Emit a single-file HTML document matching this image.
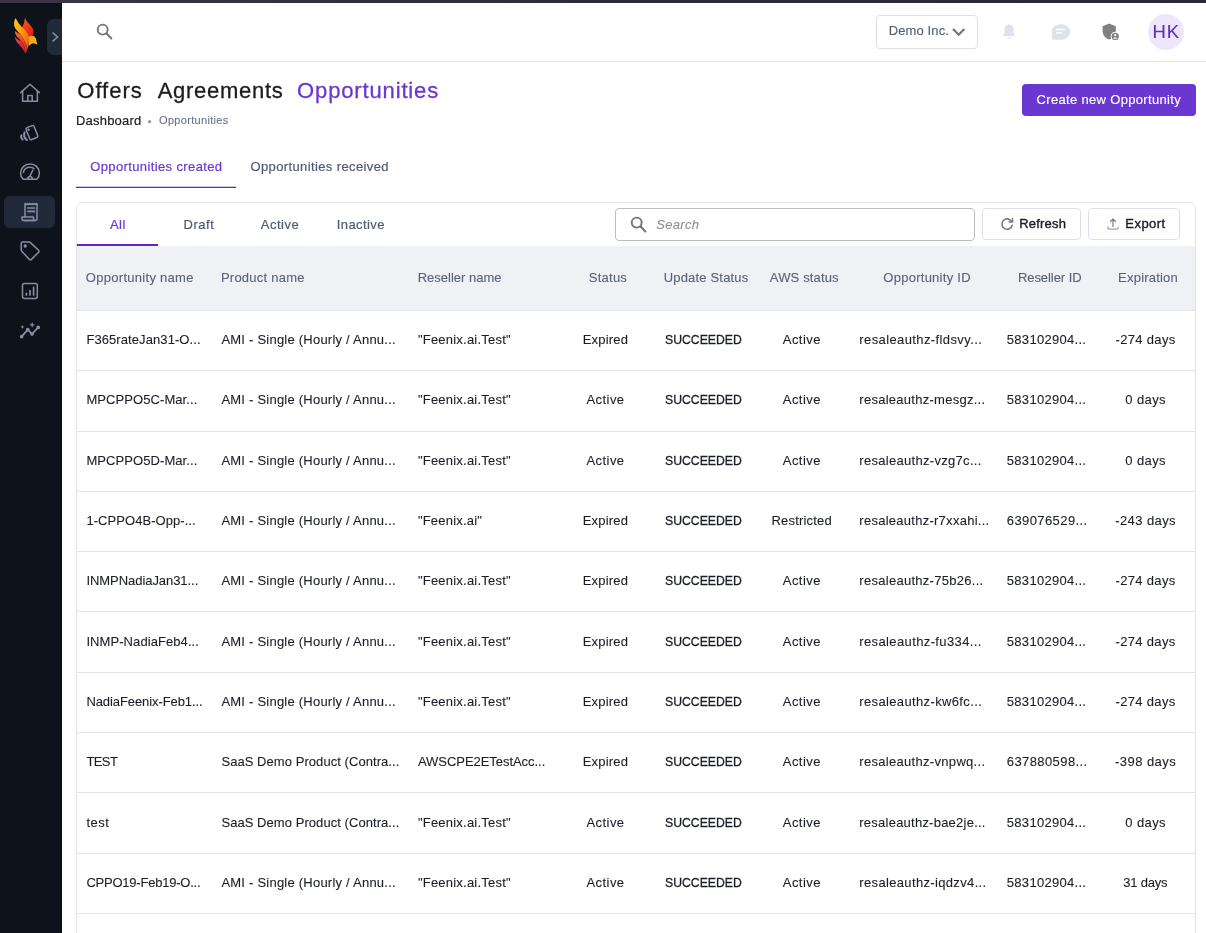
<!DOCTYPE html>
<html>
<head>
<meta charset="utf-8">
<title>Opportunities</title>
<style>
*{box-sizing:border-box;margin:0;padding:0}
html,body{width:1206px;height:933px;overflow:hidden;background:#fff;font-family:"Liberation Sans",sans-serif;color:#1b1e26}
.abs{position:absolute}
#topbar{left:0;top:0;width:1206px;height:3px;background:linear-gradient(90deg,#3a3546 0,#2c2938 55%,#2b2838 100%);z-index:10}
#side{left:0;top:0;width:62px;height:933px;background:#0e121b}
#toggle{left:47px;top:19px;width:15px;height:36px;background:#222a3a;border-radius:7px 0 0 7px}
#header{left:62px;top:3px;width:1144px;height:59px;background:#fff;border-bottom:1px solid #e1e4ea}
.navact{left:4px;top:196px;width:51px;height:32px;background:#222a3a;border-radius:6px}
.t{position:absolute;white-space:nowrap;line-height:1;-webkit-text-stroke:0.1px}
#company{left:876px;top:15px;width:102px;height:34px;border:1px solid #dcdfe6;border-radius:4px}
#avatar{left:1148px;top:14px;width:36px;height:36px;border-radius:50%;background:#efe6fd}
#createbtn{left:1022px;top:84px;width:174px;height:32px;background:#6a37d0;border-radius:4px}
#tabline{left:76px;top:186px;width:160px;height:2px;background:linear-gradient(#6938d3 0,#6938d3 100%);background:linear-gradient(rgba(90,40,200,.3) 50%,#5e2ccb 50%)}
#card{left:76px;top:202px;width:1120px;height:760px;border:1px solid #e1e4ea;border-radius:7px}
#allline{left:77px;top:244px;width:81px;height:2px;background:#5a28c8}
#thead{left:77px;top:246px;width:1118px;height:65px;background:#eff1f5;border-bottom:1px solid #e1e4ea;border-radius:0 2px 0 0}
#search{left:615px;top:208px;width:360px;height:33px;border:1px solid #bdbdbd;border-radius:4px}
.btn{border:1px solid #dcdfe6;border-radius:4px;height:32px;top:208px}
.row{left:77px;width:1118px;height:1px;background:#e1e4ea}
svg{position:absolute;overflow:visible}
.ic{fill:none;stroke:#858fa3;stroke-width:1.5;stroke-linecap:round;stroke-linejoin:round}
</style>
</head>
<body>
<div id="wrap" style="position:absolute;left:0;top:0;width:1206px;height:933px;will-change:transform;overflow:hidden">
<div class="abs" id="side"></div>
<div class="abs" id="topbar"></div>
<div class="abs" id="toggle"></div>
<div class="abs navact"></div>
<div class="abs" id="header"></div>

<!-- logo -->
<svg style="left:13px;top:16px" width="26" height="40" viewBox="0 0 26 40">
<defs>
<linearGradient id="g1" x1="0" y1="0" x2="1" y2="1"><stop offset="0" stop-color="#ffd21a"/><stop offset="0.55" stop-color="#f98a12"/><stop offset="1" stop-color="#ee4a16"/></linearGradient>
<linearGradient id="g2" x1="0" y1="0" x2="0.6" y2="1"><stop offset="0" stop-color="#f7631a"/><stop offset="1" stop-color="#e4201c"/></linearGradient>
<linearGradient id="g3" x1="0" y1="0" x2="1" y2="1"><stop offset="0" stop-color="#f7701a"/><stop offset="1" stop-color="#e0201e"/></linearGradient>
<linearGradient id="g4" x1="0" y1="0" x2="1" y2="1"><stop offset="0" stop-color="#e8455a"/><stop offset="1" stop-color="#d4141c"/></linearGradient><linearGradient id="g5" x1="0" y1="0" x2="1" y2="1"><stop offset="0" stop-color="#f4a01a"/><stop offset="1" stop-color="#f6b818"/></linearGradient></defs>
<path d="M12 1.2 C12.6 4 14.2 5.8 15.8 7.6 C18 10 20.4 12.4 20.5 15.2 C20.5 17 20 18.6 19 20 L15 21.4 C13.4 17.6 10.4 14 9 11.4 C10.4 9.4 11.6 5.6 12 1.2Z" fill="url(#g2)"/>
<path d="M1.7 20.4 C3.5 23 6 24.5 7.9 24.8 L11.5 31 L12.5 37.8 C11.5 36 11 35 10.4 34 C9.5 32.5 8.5 31.3 7.3 29.9 C5.8 28.2 3.8 26.5 3.2 24.8 C2.4 23.5 2 22 1.7 20.4Z" fill="url(#g4)"/>
<path d="M1.9 15 L7.9 19.1 L12.5 26.8 L14.3 32 L12.5 38.8 C12.6 36 12.2 33 11.5 31 C10.5 28.5 9.5 27 7.9 24.8 C6 22.5 3.2 20.5 2.2 17.5Z" fill="url(#g3)"/>
<path d="M2.7 2 C4.5 6 6.5 8.5 8.4 10.4 C11 13 13.5 15.5 14.5 17.6 C16 20 16.4 22 16.2 25 C15.8 30 14 35 12.5 38.8 C13.6 35.5 14.6 33.5 14.3 32 C13.8 29.5 13.2 28 12.5 26.8 C11 24 9.5 21.5 7.9 19.1 C5.5 16 2.5 13.5 1.4 10.4 C0.8 8 1 4.5 2.7 2Z" fill="url(#g1)"/>
<path d="M15.5 21.6 C16.4 20 18.6 19.4 20.4 20 C22 20.6 22.8 22.2 23.2 23.8 C23.5 25.4 23.9 27.2 24.4 28.8 C23 27.8 21.4 27 19.8 27.2 C18.2 27.6 17 29 15.6 29.8 C16.2 27 16.4 24 15.5 21.6Z" fill="url(#g5)"/>
</svg>
<!-- toggle chevron -->
<svg style="left:47px;top:19px" width="15" height="36" viewBox="0 0 15 36"><path d="M5.6 13.6 L10.6 18 L5.6 22.4" fill="none" stroke="#8390a8" stroke-width="1.5"/></svg>

<!-- sidebar icons -->
<svg style="left:19px;top:82px" width="22" height="22" viewBox="0 0 22 22" class="ic"><path d="M1.6 10.6 L11 2.2 L20.4 10.6"/><path d="M3.6 9 V19.2 H18.4 V9"/><path d="M8.8 19.2 V13.4 H13.2 V19.2"/></svg>
<svg style="left:19px;top:123px" width="22" height="22" viewBox="0 0 22 22" class="ic"><g transform="rotate(-22 12.9 9.6)"><rect x="8.6" y="3.2" width="8.6" height="12.8" rx="1.6"/><circle cx="10.9" cy="5.6" r="0.5" fill="#858fa3"/></g><path d="M5.6 9.4 C4.6 12 5.6 15.2 7.8 17" stroke-width="2.1"/><path d="M2.4 12.2 C1.8 13.8 2.4 15.6 3.6 16.6" stroke-width="1.9"/></svg>
<svg style="left:19px;top:162px" width="22" height="20" viewBox="0 0 22 20" class="ic"><path d="M4.2 17.2 H17.8 C19.6 15.6 20.4 13.4 20.4 11.2 C20.4 6 16.2 2 11 2 C5.8 2 1.6 6 1.6 11.2 C1.6 13.4 2.4 15.6 4.2 17.2Z"/><path d="M10.8 14.4 L13.8 8.2"/><path d="M4.4 10.4 C5 7.2 7.8 5.2 11 5.2 C12.6 5.2 14 5.7 15 6.6"/><path d="M8.6 17 C8.8 15.4 9.8 14.6 11 14.6 C12.2 14.6 13.2 15.4 13.4 17"/></svg>
<svg style="left:19px;top:201px" width="22" height="22" viewBox="0 0 22 22" class="ic" style="stroke:#9ca6ba"><path d="M6 16 V2.6 L7.2 3.4 L8.4 2.6 L9.6 3.4 L10.8 2.6 L12 3.4 L13.2 2.6 L14.4 3.4 L15.6 2.6 L16.8 3.4 L18 2.6 V17.4 C18 18.6 17.2 19.4 16 19.4 H5"/><path d="M3 16 H14.4 V17.6 C14.4 18.6 15 19.4 16 19.4 H4.8 C3.8 19.4 3 18.6 3 17.6Z"/><path d="M9 7 H15.4 M9 10.4 H15.4" stroke-width="1.7"/></svg>
<svg style="left:19px;top:240px" width="22" height="22" viewBox="0 0 22 22" class="ic"><path d="M2.2 3.4 C2.2 2.6 2.8 2 3.6 2 H10 C10.5 2 11 2.2 11.4 2.6 L19.6 10.2 C20.2 10.8 20.2 11.6 19.6 12.2 L12.4 19.4 C11.8 20 11 20 10.4 19.4 L2.8 11.2 C2.4 10.8 2.2 10.3 2.2 9.8Z"/><circle cx="6.2" cy="6" r="0.9" fill="#858fa3"/></svg>
<svg style="left:19px;top:280px" width="22" height="22" viewBox="0 0 22 22" class="ic"><rect x="3.5" y="3.6" width="14.8" height="14.8" rx="2"/><path d="M7.4 15 V13.4 M11 15 V10.6 M14.6 15 V7.4" stroke-width="1.7"/></svg>
<svg style="left:19px;top:320px" width="22" height="22" viewBox="0 0 22 22" class="ic"><path d="M2.6 16.6 L8.8 9.6 L13 14 L19.2 7.4" stroke-width="1.8"/><circle cx="2.6" cy="16.6" r="1.1" fill="#858fa3"/><circle cx="8.8" cy="9.6" r="1.1" fill="#858fa3"/><circle cx="13" cy="14" r="1.1" fill="#858fa3"/><circle cx="19.2" cy="7.4" r="1.1" fill="#858fa3"/><path d="M13.2 3 V6.6 M11.4 4.8 H15" stroke-width="1.2"/><path d="M3.4 6 V8 M2.4 7 H4.4" stroke-width="1"/></svg>

<!-- header -->
<svg style="left:94px;top:21px" width="22" height="22" viewBox="0 0 22 22"><circle cx="8.7" cy="8.6" r="5" fill="none" stroke="#757575" stroke-width="1.95"/><path d="M12.6 12.6 L17.4 17.4" stroke="#757575" stroke-width="2.1" stroke-linecap="round"/></svg>
<div class="abs" id="company"></div>
<svg style="left:950px;top:26px" width="16" height="12" viewBox="0 0 16 12"><path d="M3 3 L8.7 8.7 L14.4 3" fill="none" stroke="#767676" stroke-width="2.3"/></svg>
<!-- bell -->
<svg style="left:1000px;top:23px" width="18" height="18" viewBox="0 0 18 18"><path d="M9 1.6 C6.2 1.6 4.4 3.8 4.4 6.4 V9.6 C4.4 10.6 3.8 11.4 3.2 12 C2.8 12.4 3 13.2 3.8 13.2 H14.2 C15 13.2 15.2 12.4 14.8 12 C14.2 11.4 13.6 10.6 13.6 9.6 V6.4 C13.6 3.8 11.8 1.6 9 1.6Z" fill="#dfe2ea"/><path d="M7 14.4 H11 C11 15.4 10.1 16 9 16 C7.9 16 7 15.4 7 14.4Z" fill="#e6e8ee"/></svg>
<!-- chat -->
<svg style="left:1051px;top:24px" width="20" height="17" viewBox="0 0 20 17"><path d="M9.6 0.2 H10.4 C15.4 0.2 19 3.4 19 7.6 C19 12.2 15.4 15.8 10.4 15.8 H3 C1.6 15.8 0.8 15 0.8 13.6 V8 C0.8 3.4 4.6 0.2 9.6 0.2Z" fill="#dfe2ea"/><path d="M5.6 5.4 H13.6 M5.6 9 H10.2" stroke="#fff" stroke-width="1.5" stroke-linecap="round"/></svg>
<!-- shield -->
<svg style="left:1101px;top:23px" width="20" height="18" viewBox="0 0 20 18"><path d="M8.2 0.6 L14.8 3.2 V8 C14.8 12 12 15.4 8.2 16.6 C4.4 15.4 1.6 12 1.6 8 V3.2Z" fill="#808080"/><circle cx="14.2" cy="13.4" r="4.6" fill="#fff"/><circle cx="14.2" cy="13.4" r="3.6" fill="#808080"/><circle cx="14.2" cy="12.2" r="1.1" fill="#fff"/><path d="M12 15.2 C12.6 14.2 15.8 14.2 16.4 15.2 C15.8 16 12.6 16 12 15.2Z" fill="#fff"/></svg>
<div class="abs" id="avatar"></div>

<svg style="left:146px;top:118px" width="8" height="8" viewBox="0 0 8 8"><circle cx="3.6" cy="3.7" r="1.6" fill="#8d97ad"/></svg>
<div class="abs" id="createbtn"></div>
<div class="abs" id="tabline"></div>

<!-- card -->
<div class="abs" id="card"></div>
<div class="abs" id="thead"></div>
<div class="abs" id="allline"></div>
<div class="abs" id="search"></div>
<svg style="left:628px;top:214px" width="22" height="22" viewBox="0 0 22 22"><circle cx="8.7" cy="8.6" r="5" fill="none" stroke="#757575" stroke-width="1.95"/><path d="M12.6 12.6 L17.4 17.4" stroke="#757575" stroke-width="2.1" stroke-linecap="round"/></svg>
<div class="abs btn" style="left:982px;width:99px"></div>
<div class="abs btn" style="left:1088px;width:92px"></div>
<!-- refresh icon -->
<svg style="left:1000px;top:217px" width="14" height="14" viewBox="0 0 14 14"><path d="M11.6 4.4 A5.2 5.2 0 1 0 12.2 8.2" fill="none" stroke="#7a7a7a" stroke-width="1.6" stroke-linecap="round"/><path d="M12.6 1.4 V5 H9" fill="none" stroke="#7a7a7a" stroke-width="1.4" stroke-linecap="round" stroke-linejoin="round"/></svg>
<!-- export icon -->
<svg style="left:1106px;top:217px" width="14" height="14" viewBox="0 0 14 14"><path d="M7 9.4 V2.2 M4.4 4.6 L7 2 L9.6 4.6" fill="none" stroke="#7a7a7a" stroke-width="1.2" stroke-linecap="round" stroke-linejoin="round"/><path d="M1.8 9.8 V10.6 C1.8 11.6 2.4 12.2 3.4 12.2 H10.6 C11.6 12.2 12.2 11.6 12.2 10.6 V9.8" fill="none" stroke="#9aa1b0" stroke-width="1.2" stroke-linecap="round"/></svg>

<div class="t" style="left:888.71px;top:24.40px;font-size:13px;color:#515a74;letter-spacing:0.115px;">Demo Inc.</div>
<div class="t" style="left:1152.57px;top:23.35px;font-size:18.5px;color:#5b30c4;letter-spacing:0.762px;">HK</div>
<div class="t" style="left:77.31px;top:79.60px;font-size:22px;color:#1c1c1c;letter-spacing:0.993px;-webkit-text-stroke:0.3px;">Offers</div>
<div class="t" style="left:157.71px;top:79.60px;font-size:22px;color:#1c1c1c;letter-spacing:0.717px;-webkit-text-stroke:0.3px;">Agreements</div>
<div class="t" style="left:297.11px;top:79.60px;font-size:22px;color:#6938d3;letter-spacing:0.852px;-webkit-text-stroke:0.3px;">Opportunities</div>
<div class="t" style="left:76.02px;top:113.70px;font-size:13px;color:#1c1c1c;letter-spacing:0.195px;-webkit-text-stroke:0.2px;">Dashboard</div>
<div class="t" style="left:159.00px;top:115.00px;font-size:11px;color:#66718c;letter-spacing:0.321px;">Opportunities</div>
<div class="t" style="left:1036.51px;top:92.90px;font-size:13px;color:#ffffff;letter-spacing:0.332px;-webkit-text-stroke:0.15px #fff;">Create new Opportunity</div>
<div class="t" style="left:90.22px;top:160.10px;font-size:13px;color:#6938d3;letter-spacing:0.379px;-webkit-text-stroke:0.2px;">Opportunities created</div>
<div class="t" style="left:250.41px;top:160.10px;font-size:13px;color:#515a74;letter-spacing:0.385px;-webkit-text-stroke:0.2px;">Opportunities received</div>
<div class="t" style="left:109.92px;top:218.20px;font-size:13px;color:#6938d3;letter-spacing:0.458px;-webkit-text-stroke:0.2px;">All</div>
<div class="t" style="left:183.51px;top:218.20px;font-size:13px;color:#515a74;letter-spacing:0.550px;-webkit-text-stroke:0.2px;">Draft</div>
<div class="t" style="left:260.81px;top:218.20px;font-size:13px;color:#515a74;letter-spacing:0.513px;-webkit-text-stroke:0.2px;">Active</div>
<div class="t" style="left:336.72px;top:218.20px;font-size:13px;color:#515a74;letter-spacing:0.408px;-webkit-text-stroke:0.2px;">Inactive</div>
<div class="t" style="left:656.21px;top:218.20px;font-size:13px;color:#8c8c8c;letter-spacing:0.333px;font-style:italic;">Search</div>
<div class="t" style="left:1019.21px;top:216.80px;font-size:13px;color:#1b1e26;letter-spacing:0.190px;-webkit-text-stroke:0.4px;">Refresh</div>
<div class="t" style="left:1125.32px;top:216.80px;font-size:13px;color:#1b1e26;letter-spacing:0.458px;-webkit-text-stroke:0.4px;">Export</div>
<div class="t" style="left:85.82px;top:271.40px;font-size:13px;color:#5a6179;letter-spacing:0.288px;">Opportunity name</div>
<div class="t" style="left:220.91px;top:271.40px;font-size:13px;color:#5a6179;letter-spacing:0.239px;">Product name</div>
<div class="t" style="left:417.72px;top:271.40px;font-size:13px;color:#5a6179;letter-spacing:0.003px;">Reseller name</div>
<div class="t" style="left:588.71px;top:271.40px;font-size:13px;color:#5a6179;letter-spacing:0.262px;">Status</div>
<div class="t" style="left:663.71px;top:271.40px;font-size:13px;color:#5a6179;letter-spacing:0.182px;">Update Status</div>
<div class="t" style="left:769.81px;top:271.40px;font-size:13px;color:#5a6179;letter-spacing:0.148px;">AWS status</div>
<div class="t" style="left:883.31px;top:271.40px;font-size:13px;color:#5a6179;letter-spacing:0.265px;">Opportunity ID</div>
<div class="t" style="left:1017.91px;top:271.40px;font-size:13px;color:#5a6179;letter-spacing:-0.063px;">Reseller ID</div>
<div class="t" style="left:1118.12px;top:271.40px;font-size:13px;color:#5a6179;letter-spacing:0.206px;">Expiration</div>
<div class="t" style="left:86.42px;top:333.30px;font-size:13px;color:#1b1e26;letter-spacing:0.084px;">F365rateJan31-O...</div>
<div class="t" style="left:221.41px;top:333.30px;font-size:13px;color:#1b1e26;letter-spacing:0.226px;">AMI - Single (Hourly / Annu...</div>
<div class="t" style="left:417.92px;top:333.30px;font-size:13px;color:#1b1e26;letter-spacing:0.216px;">"Feenix.ai.Test"</div>
<div class="t" style="left:582.71px;top:333.30px;font-size:13px;color:#1b1e26;letter-spacing:0.182px;">Expired</div>
<div class="t" style="left:665.12px;top:333.30px;font-size:13px;color:#1b1e26;letter-spacing:0.000px;-webkit-text-stroke:0.3px;transform:scaleX(0.9405);transform-origin:0 0;">SUCCEEDED</div>
<div class="t" style="left:782.81px;top:333.30px;font-size:13px;color:#1b1e26;letter-spacing:0.433px;">Active</div>
<div class="t" style="left:859.31px;top:333.30px;font-size:13px;color:#1b1e26;letter-spacing:0.391px;">resaleauthz-fldsvy...</div>
<div class="t" style="left:1006.81px;top:333.30px;font-size:13px;color:#1b1e26;letter-spacing:0.297px;">583102904...</div>
<div class="t" style="left:1115.57px;top:333.30px;font-size:13px;color:#1b1e26;letter-spacing:0.322px;">-274 days</div>
<div class="t" style="left:86.42px;top:393.30px;font-size:13px;color:#1b1e26;letter-spacing:0.077px;">MPCPPO5C-Mar...</div>
<div class="t" style="left:221.41px;top:393.30px;font-size:13px;color:#1b1e26;letter-spacing:0.226px;">AMI - Single (Hourly / Annu...</div>
<div class="t" style="left:417.92px;top:393.30px;font-size:13px;color:#1b1e26;letter-spacing:0.216px;">"Feenix.ai.Test"</div>
<div class="t" style="left:586.51px;top:393.30px;font-size:13px;color:#1b1e26;letter-spacing:0.433px;">Active</div>
<div class="t" style="left:665.12px;top:393.30px;font-size:13px;color:#1b1e26;letter-spacing:0.000px;-webkit-text-stroke:0.3px;transform:scaleX(0.9405);transform-origin:0 0;">SUCCEEDED</div>
<div class="t" style="left:782.81px;top:393.30px;font-size:13px;color:#1b1e26;letter-spacing:0.433px;">Active</div>
<div class="t" style="left:859.31px;top:393.30px;font-size:13px;color:#1b1e26;letter-spacing:0.268px;">resaleauthz-mesgz...</div>
<div class="t" style="left:1006.81px;top:393.30px;font-size:13px;color:#1b1e26;letter-spacing:0.297px;">583102904...</div>
<div class="t" style="left:1125.22px;top:393.30px;font-size:13px;color:#1b1e26;letter-spacing:0.412px;">0 days</div>
<div class="t" style="left:86.42px;top:454.00px;font-size:13px;color:#1b1e26;letter-spacing:0.077px;">MPCPPO5D-Mar...</div>
<div class="t" style="left:221.41px;top:454.00px;font-size:13px;color:#1b1e26;letter-spacing:0.226px;">AMI - Single (Hourly / Annu...</div>
<div class="t" style="left:417.92px;top:454.00px;font-size:13px;color:#1b1e26;letter-spacing:0.216px;">"Feenix.ai.Test"</div>
<div class="t" style="left:586.51px;top:454.00px;font-size:13px;color:#1b1e26;letter-spacing:0.433px;">Active</div>
<div class="t" style="left:665.12px;top:454.00px;font-size:13px;color:#1b1e26;letter-spacing:0.000px;-webkit-text-stroke:0.3px;transform:scaleX(0.9405);transform-origin:0 0;">SUCCEEDED</div>
<div class="t" style="left:782.81px;top:454.00px;font-size:13px;color:#1b1e26;letter-spacing:0.433px;">Active</div>
<div class="t" style="left:859.31px;top:454.00px;font-size:13px;color:#1b1e26;letter-spacing:0.301px;">resaleauthz-vzg7c...</div>
<div class="t" style="left:1006.81px;top:454.00px;font-size:13px;color:#1b1e26;letter-spacing:0.297px;">583102904...</div>
<div class="t" style="left:1125.22px;top:454.00px;font-size:13px;color:#1b1e26;letter-spacing:0.412px;">0 days</div>
<div class="t" style="left:86.42px;top:514.00px;font-size:13px;color:#1b1e26;letter-spacing:0.053px;">1-CPPO4B-Opp-...</div>
<div class="t" style="left:221.41px;top:514.00px;font-size:13px;color:#1b1e26;letter-spacing:0.226px;">AMI - Single (Hourly / Annu...</div>
<div class="t" style="left:417.92px;top:514.00px;font-size:13px;color:#1b1e26;letter-spacing:0.199px;">"Feenix.ai"</div>
<div class="t" style="left:582.71px;top:514.00px;font-size:13px;color:#1b1e26;letter-spacing:0.182px;">Expired</div>
<div class="t" style="left:665.12px;top:514.00px;font-size:13px;color:#1b1e26;letter-spacing:0.000px;-webkit-text-stroke:0.3px;transform:scaleX(0.9405);transform-origin:0 0;">SUCCEEDED</div>
<div class="t" style="left:771.41px;top:514.00px;font-size:13px;color:#1b1e26;letter-spacing:0.204px;">Restricted</div>
<div class="t" style="left:859.31px;top:514.00px;font-size:13px;color:#1b1e26;letter-spacing:0.266px;">resaleauthz-r7xxahi...</div>
<div class="t" style="left:1006.81px;top:514.00px;font-size:13px;color:#1b1e26;letter-spacing:0.406px;">639076529...</div>
<div class="t" style="left:1115.22px;top:514.00px;font-size:13px;color:#1b1e26;letter-spacing:0.410px;">-243 days</div>
<div class="t" style="left:86.42px;top:574.30px;font-size:13px;color:#1b1e26;letter-spacing:-0.054px;">INMPNadiaJan31...</div>
<div class="t" style="left:221.41px;top:574.30px;font-size:13px;color:#1b1e26;letter-spacing:0.226px;">AMI - Single (Hourly / Annu...</div>
<div class="t" style="left:417.92px;top:574.30px;font-size:13px;color:#1b1e26;letter-spacing:0.216px;">"Feenix.ai.Test"</div>
<div class="t" style="left:582.71px;top:574.30px;font-size:13px;color:#1b1e26;letter-spacing:0.182px;">Expired</div>
<div class="t" style="left:665.12px;top:574.30px;font-size:13px;color:#1b1e26;letter-spacing:0.000px;-webkit-text-stroke:0.3px;transform:scaleX(0.9405);transform-origin:0 0;">SUCCEEDED</div>
<div class="t" style="left:782.81px;top:574.30px;font-size:13px;color:#1b1e26;letter-spacing:0.433px;">Active</div>
<div class="t" style="left:859.31px;top:574.30px;font-size:13px;color:#1b1e26;letter-spacing:0.281px;">resaleauthz-75b26...</div>
<div class="t" style="left:1006.81px;top:574.30px;font-size:13px;color:#1b1e26;letter-spacing:0.297px;">583102904...</div>
<div class="t" style="left:1115.57px;top:574.30px;font-size:13px;color:#1b1e26;letter-spacing:0.322px;">-274 days</div>
<div class="t" style="left:86.42px;top:635.30px;font-size:13px;color:#1b1e26;letter-spacing:0.075px;">INMP-NadiaFeb4...</div>
<div class="t" style="left:221.41px;top:635.30px;font-size:13px;color:#1b1e26;letter-spacing:0.226px;">AMI - Single (Hourly / Annu...</div>
<div class="t" style="left:417.92px;top:635.30px;font-size:13px;color:#1b1e26;letter-spacing:0.216px;">"Feenix.ai.Test"</div>
<div class="t" style="left:582.71px;top:635.30px;font-size:13px;color:#1b1e26;letter-spacing:0.182px;">Expired</div>
<div class="t" style="left:665.12px;top:635.30px;font-size:13px;color:#1b1e26;letter-spacing:0.000px;-webkit-text-stroke:0.3px;transform:scaleX(0.9405);transform-origin:0 0;">SUCCEEDED</div>
<div class="t" style="left:782.81px;top:635.30px;font-size:13px;color:#1b1e26;letter-spacing:0.433px;">Active</div>
<div class="t" style="left:859.31px;top:635.30px;font-size:13px;color:#1b1e26;letter-spacing:0.377px;">resaleauthz-fu334...</div>
<div class="t" style="left:1006.81px;top:635.30px;font-size:13px;color:#1b1e26;letter-spacing:0.297px;">583102904...</div>
<div class="t" style="left:1115.57px;top:635.30px;font-size:13px;color:#1b1e26;letter-spacing:0.322px;">-274 days</div>
<div class="t" style="left:86.42px;top:695.30px;font-size:13px;color:#1b1e26;letter-spacing:-0.090px;">NadiaFeenix-Feb1...</div>
<div class="t" style="left:221.41px;top:695.30px;font-size:13px;color:#1b1e26;letter-spacing:0.226px;">AMI - Single (Hourly / Annu...</div>
<div class="t" style="left:417.92px;top:695.30px;font-size:13px;color:#1b1e26;letter-spacing:0.216px;">"Feenix.ai.Test"</div>
<div class="t" style="left:582.71px;top:695.30px;font-size:13px;color:#1b1e26;letter-spacing:0.182px;">Expired</div>
<div class="t" style="left:665.12px;top:695.30px;font-size:13px;color:#1b1e26;letter-spacing:0.000px;-webkit-text-stroke:0.3px;transform:scaleX(0.9405);transform-origin:0 0;">SUCCEEDED</div>
<div class="t" style="left:782.81px;top:695.30px;font-size:13px;color:#1b1e26;letter-spacing:0.433px;">Active</div>
<div class="t" style="left:859.31px;top:695.30px;font-size:13px;color:#1b1e26;letter-spacing:0.361px;">resaleauthz-kw6fc...</div>
<div class="t" style="left:1006.81px;top:695.30px;font-size:13px;color:#1b1e26;letter-spacing:0.297px;">583102904...</div>
<div class="t" style="left:1115.57px;top:695.30px;font-size:13px;color:#1b1e26;letter-spacing:0.322px;">-274 days</div>
<div class="t" style="left:86.42px;top:755.30px;font-size:13px;color:#1b1e26;letter-spacing:-0.588px;">TEST</div>
<div class="t" style="left:221.41px;top:755.30px;font-size:13px;color:#1b1e26;letter-spacing:0.058px;">SaaS Demo Product (Contra...</div>
<div class="t" style="left:417.92px;top:755.30px;font-size:13px;color:#1b1e26;letter-spacing:-0.043px;">AWSCPE2ETestAcc...</div>
<div class="t" style="left:582.71px;top:755.30px;font-size:13px;color:#1b1e26;letter-spacing:0.182px;">Expired</div>
<div class="t" style="left:665.12px;top:755.30px;font-size:13px;color:#1b1e26;letter-spacing:0.000px;-webkit-text-stroke:0.3px;transform:scaleX(0.9405);transform-origin:0 0;">SUCCEEDED</div>
<div class="t" style="left:782.81px;top:755.30px;font-size:13px;color:#1b1e26;letter-spacing:0.433px;">Active</div>
<div class="t" style="left:859.31px;top:755.30px;font-size:13px;color:#1b1e26;letter-spacing:0.306px;">resaleauthz-vnpwq...</div>
<div class="t" style="left:1006.81px;top:755.30px;font-size:13px;color:#1b1e26;letter-spacing:0.406px;">637880598...</div>
<div class="t" style="left:1115.07px;top:755.30px;font-size:13px;color:#1b1e26;letter-spacing:0.447px;">-398 days</div>
<div class="t" style="left:86.42px;top:816.00px;font-size:13px;color:#1b1e26;letter-spacing:0.500px;">test</div>
<div class="t" style="left:221.41px;top:816.00px;font-size:13px;color:#1b1e26;letter-spacing:0.058px;">SaaS Demo Product (Contra...</div>
<div class="t" style="left:417.92px;top:816.00px;font-size:13px;color:#1b1e26;letter-spacing:0.216px;">"Feenix.ai.Test"</div>
<div class="t" style="left:586.51px;top:816.00px;font-size:13px;color:#1b1e26;letter-spacing:0.433px;">Active</div>
<div class="t" style="left:665.12px;top:816.00px;font-size:13px;color:#1b1e26;letter-spacing:0.000px;-webkit-text-stroke:0.3px;transform:scaleX(0.9405);transform-origin:0 0;">SUCCEEDED</div>
<div class="t" style="left:782.81px;top:816.00px;font-size:13px;color:#1b1e26;letter-spacing:0.433px;">Active</div>
<div class="t" style="left:859.31px;top:816.00px;font-size:13px;color:#1b1e26;letter-spacing:0.237px;">resaleauthz-bae2je...</div>
<div class="t" style="left:1006.81px;top:816.00px;font-size:13px;color:#1b1e26;letter-spacing:0.297px;">583102904...</div>
<div class="t" style="left:1125.22px;top:816.00px;font-size:13px;color:#1b1e26;letter-spacing:0.412px;">0 days</div>
<div class="t" style="left:86.42px;top:876.00px;font-size:13px;color:#1b1e26;letter-spacing:-0.226px;">CPPO19-Feb19-O...</div>
<div class="t" style="left:221.41px;top:876.00px;font-size:13px;color:#1b1e26;letter-spacing:0.226px;">AMI - Single (Hourly / Annu...</div>
<div class="t" style="left:417.92px;top:876.00px;font-size:13px;color:#1b1e26;letter-spacing:0.216px;">"Feenix.ai.Test"</div>
<div class="t" style="left:586.51px;top:876.00px;font-size:13px;color:#1b1e26;letter-spacing:0.433px;">Active</div>
<div class="t" style="left:665.12px;top:876.00px;font-size:13px;color:#1b1e26;letter-spacing:0.000px;-webkit-text-stroke:0.3px;transform:scaleX(0.9405);transform-origin:0 0;">SUCCEEDED</div>
<div class="t" style="left:782.81px;top:876.00px;font-size:13px;color:#1b1e26;letter-spacing:0.433px;">Active</div>
<div class="t" style="left:859.31px;top:876.00px;font-size:13px;color:#1b1e26;letter-spacing:0.346px;">resaleauthz-iqdzv4...</div>
<div class="t" style="left:1006.81px;top:876.00px;font-size:13px;color:#1b1e26;letter-spacing:0.297px;">583102904...</div>
<div class="t" style="left:1123.16px;top:876.00px;font-size:13px;color:#1b1e26;letter-spacing:-0.179px;">31 days</div>
<div class="abs row" style="top:370px"></div>
<div class="abs row" style="top:431px"></div>
<div class="abs row" style="top:491px"></div>
<div class="abs row" style="top:551px"></div>
<div class="abs row" style="top:611px"></div>
<div class="abs row" style="top:672px"></div>
<div class="abs row" style="top:732px"></div>
<div class="abs row" style="top:792px"></div>
<div class="abs row" style="top:853px"></div>
<div class="abs row" style="top:913px"></div>
</div>
</body>
</html>
